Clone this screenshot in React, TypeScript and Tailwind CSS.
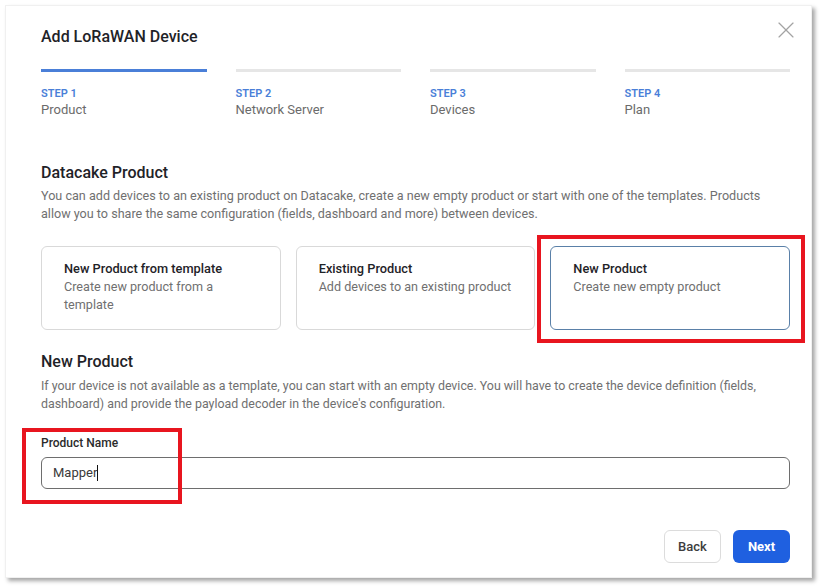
import { X } from 'lucide-react'

const steps = [
  { label: 'STEP 1', name: 'Product', active: true },
  { label: 'STEP 2', name: 'Network Server', active: false },
  { label: 'STEP 3', name: 'Devices', active: false },
  { label: 'STEP 4', name: 'Plan', active: false },
]

const options = [
  { title: 'New Product from template', text: 'Create new product from a template', selected: false },
  { title: 'Existing Product', text: 'Add devices to an existing product', selected: false },
  { title: 'New Product', text: 'Create new empty product', selected: true },
]

export default function App() {
  return (
    <div className="relative h-[587px] w-[821px] overflow-hidden bg-white font-['Roboto',sans-serif]">
      <div className="pl-[5px] pt-[5px]">
        <div className="relative flex h-[573px] w-[807px] flex-col border border-[#f0f0f0] bg-white pb-[14px] pl-[35px] pr-[21px] pt-[19px] shadow-[3px_3px_4px_rgba(0,0,0,0.35)]">
          <h1 className="text-[16px] font-medium leading-6 text-[#1f2328]">Add LoRaWAN Device</h1>
          <button className="absolute right-[11px] top-[10px] text-[#a3a3a3]">
            <X className="h-[28px] w-[28px]" strokeWidth={1} />
          </button>

          <div className="mt-[20px] grid grid-cols-4 gap-[29px]">
            {steps.map((s) => (
              <div key={s.label}>
                <div className={s.active ? 'h-[3px] bg-[#4a7fd8]' : 'h-[3px] bg-[#e6e6e6]'} />
                <div className="mt-[14px] text-[11px] font-semibold leading-[15px] text-[#4a7fd8]">{s.label}</div>
                <div className="mt-[1px] text-[13px] leading-4 text-[#6b6b6b]">{s.name}</div>
              </div>
            ))}
          </div>

          <h2 className="mt-[43px] text-[16px] font-medium leading-6 text-[#1f2328]">Datacake Product</h2>
          <p className="mt-[2px] text-[12.6px] leading-[18px] text-[#707070]">
            You can add devices to an existing product on Datacake, create a new empty product or start with one of the templates. Products allow you to share the same configuration (fields, dashboard and more) between devices.
          </p>

          <div className="mt-[23px] grid grid-cols-3 gap-[15px]">
            {options.map((o) => (
              <div
                key={o.title}
                className={
                  o.selected
                    ? 'h-[84px] rounded-md border border-[#5a80a8] bg-white pl-[22px] pr-[20px] pt-[13px]'
                    : 'h-[84px] rounded-md border border-[#d9d9d9] bg-white pl-[22px] pr-[20px] pt-[13px]'
                }
              >
                <div className="text-[12.8px] font-medium leading-[18px] text-[#1f2328]">{o.title}</div>
                <div className="text-[12.6px] leading-[18px] text-[#707070]">{o.text}</div>
              </div>
            ))}
          </div>

          <h2 className="mt-[20px] text-[16px] font-medium leading-6 text-[#1f2328]">New Product</h2>
          <p className="mt-[3px] text-[12.4px] leading-[18px] text-[#707070]">
            If your device is not available as a template, you can start with an empty device. You will have to create the device definition (fields, dashboard) and provide the payload decoder in the device's configuration.
          </p>

          <label className="mt-[22px] text-[12px] font-medium leading-4 text-[#2b2b2b]">Product Name</label>
          <div className="mt-[6px] flex h-[34px] items-center rounded-md border border-[#6e6e6e] px-[11px]">
            <span className="text-[13px] text-[#3a3a3a]">Mapper</span>
            <span className="h-[16px] w-px bg-[#111]" />
          </div>

          <div className="mt-[41px] flex justify-end gap-[12px]">
            <button className="h-[33px] w-[57px] rounded-md border border-[#dcdcdc] bg-white text-[13px] font-medium text-[#3d3d3d]">
              Back
            </button>
            <button className="h-[33px] w-[57px] rounded-md bg-[#1f60e0] text-[13px] font-bold text-white">
              Next
            </button>
          </div>
        </div>
      </div>

      <div className="pointer-events-none absolute left-[537px] top-[235px] h-[108px] w-[268px] border-4 border-[#e8151f]" />
      <div className="pointer-events-none absolute left-[22px] top-[428px] h-[76px] w-[160px] border-4 border-[#e8151f]" />
    </div>
  )
}
